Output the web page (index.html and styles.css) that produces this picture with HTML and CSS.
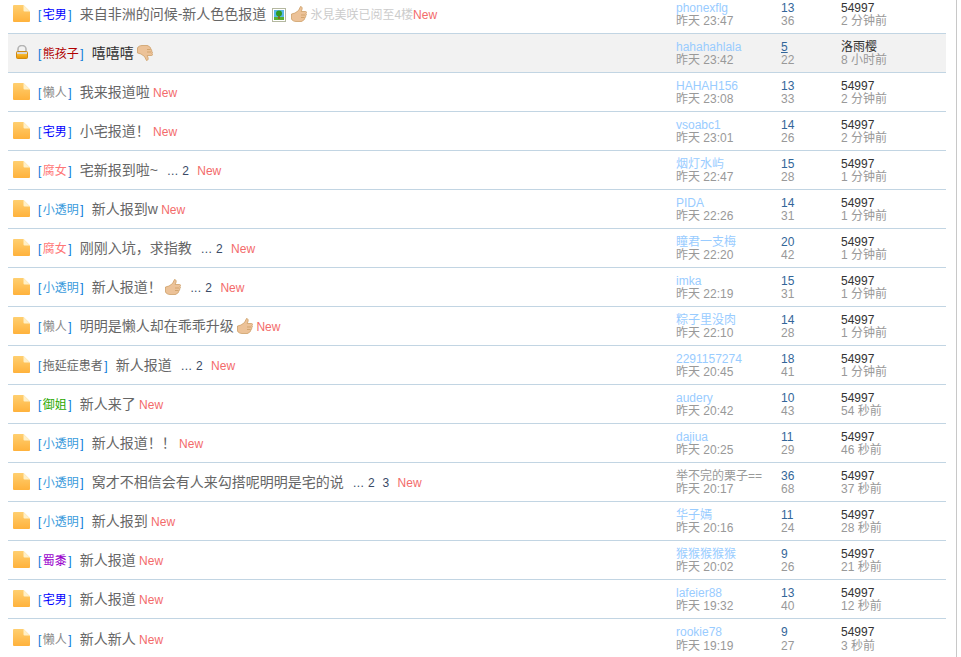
FILE: index.html
```html
<!DOCTYPE html>
<html lang="zh-CN">

<head>
    <meta charset="UTF-8">
    <meta name="viewport" content="width=device-width, initial-scale=1.0">
    <title>新人报道</title>
    <link rel="stylesheet" href="styles.css">
</head>

<body>
    <!-- icons -->
    <svg class="icon-defs" width="0" height="0">
        <defs>
            <linearGradient id="folder-fill" x1="0" y1="0" x2="0" y2="1">
                <stop offset="0" stop-color="#ffcf70" />
                <stop offset="1" stop-color="#ffb23c" />
            </linearGradient>
            <linearGradient id="lock-fill" x1="0" y1="0" x2="0" y2="1">
                <stop offset="0" stop-color="#ffd050" />
                <stop offset="1" stop-color="#e89400" />
            </linearGradient>
        </defs>
        <symbol id="i-folder" viewBox="0 0 17 17">
            <path d="M1 0H10.500L17 6.500V16A1 1 0 0 1 16 17H1A1 1 0 0 1 0 16V1A1 1 0 0 1 1 0Z" fill="url(#folder-fill)" />
            <path d="M10.500 0L17 6.500H11.500A1 1 0 0 1 10.500 5.500Z" fill="#fff0c8" />
        </symbol>
        <symbol id="i-lock" viewBox="0 0 12 14">
            <path d="M2 8V4A4 3.500 0 0 1 10 4V8" fill="none" stroke="#b4b4b4" stroke-width="1.600" />
            <rect x="0.500" y="6.500" width="11" height="7" rx="1" fill="url(#lock-fill)" stroke="#d08a10" />
            <rect x="1" y="7" width="10" height="2" fill="#d8d8d8" />
        </symbol>
        <symbol id="i-pic" viewBox="0 0 14 14">
            <rect x="0.500" y="0.500" width="13" height="13" fill="#fff" stroke="#b4b8a0" />
            <rect x="2" y="2" width="10" height="10" fill="#58b8e8" />
            <rect x="2" y="9" width="10" height="3" fill="#58b030" />
            <rect x="6.200" y="7" width="1.600" height="4" fill="#8a5a20" />
            <circle cx="7" cy="5.500" r="3" fill="#2e9a20" />
        </symbol>
        <symbol id="i-up" viewBox="0 0 16 16">
            <path d="M0.500 8L4 7L7.500 4.500L9.500 0.500C11 0.500 11.500 2 11 3.500L10.200 5.500H14.500C15.800 5.500 16 7 15 7.500C15.800 8.300 15.500 9.500 14.500 9.800C15 10.800 14.500 11.800 13.600 12C13.900 13 13.300 14 12.300 14.200C12 15 11 15.500 10 15.500H5C3 15.500 1 14.500 0.500 13Z" fill="#ecc298" stroke="#c8985c" stroke-width="0.700" />
            <path d="M10 9H14M10 11.500H13.500" stroke="#c8985c" stroke-width="0.700" />
        </symbol>
    </svg>

    <div class="page">
        <table class="thread-list">
            <colgroup>
                <col class="col-icon">
                <col class="col-title">
                <col class="col-author">
                <col class="col-num">
                <col class="col-last">
            </colgroup>
            <tbody>
                <tr>
                    <td class="icn"><svg class="ico-folder"><use href="#i-folder" /></svg></td>
                    <td><span class="tag">[<span class="t-zhai">宅男</span>]</span><a class="subject">来自非洲的问候-新人色色报道</a> <svg class="ico-pic"><use href="#i-pic" /></svg> <svg class="ico-thumb"><use href="#i-up" /></svg> <span class="read-to">氷見美咲已阅至4楼</span><a class="new">New</a></td>
                    <td class="by"><a>phonexflg</a><em>昨天 23:47</em></td>
                    <td class="num"><a>13</a><em>36</em></td>
                    <td class="by last"><a>54997</a><em>2 分钟前</em></td>
                </tr>
                <tr class="locked">
                    <td class="icn"><svg class="ico-lock"><use href="#i-lock" /></svg></td>
                    <td><span class="tag">[<span class="t-xiong">熊孩子</span>]</span><a class="subject">嘻嘻嘻</a> <svg class="ico-thumb down"><use href="#i-up" /></svg></td>
                    <td class="by"><a>hahahahlala</a><em>昨天 23:42</em></td>
                    <td class="num"><a class="under">5</a><em>22</em></td>
                    <td class="by last"><a>洛雨樱</a><em>8 小时前</em></td>
                </tr>
                <tr>
                    <td class="icn"><svg class="ico-folder"><use href="#i-folder" /></svg></td>
                    <td><span class="tag">[<span class="t-lan">懒人</span>]</span><a class="subject">我来报道啦</a> <a class="new">New</a></td>
                    <td class="by"><a>HAHAH156</a><em>昨天 23:08</em></td>
                    <td class="num"><a>13</a><em>33</em></td>
                    <td class="by last"><a>54997</a><em>2 分钟前</em></td>
                </tr>
                <tr>
                    <td class="icn"><svg class="ico-folder"><use href="#i-folder" /></svg></td>
                    <td><span class="tag">[<span class="t-zhai">宅男</span>]</span><a class="subject">小宅报道！</a> <a class="new">New</a></td>
                    <td class="by"><a>vsoabc1</a><em>昨天 23:01</em></td>
                    <td class="num"><a>14</a><em>26</em></td>
                    <td class="by last"><a>54997</a><em>2 分钟前</em></td>
                </tr>
                <tr>
                    <td class="icn"><svg class="ico-folder"><use href="#i-folder" /></svg></td>
                    <td><span class="tag">[<span class="t-fu">腐女</span>]</span><a class="subject">宅新报到啦~</a> <span class="pages">... 2</span><a class="new">New</a></td>
                    <td class="by"><a>烟灯水屿</a><em>昨天 22:47</em></td>
                    <td class="num"><a>15</a><em>28</em></td>
                    <td class="by last"><a>54997</a><em>1 分钟前</em></td>
                </tr>
                <tr>
                    <td class="icn"><svg class="ico-folder"><use href="#i-folder" /></svg></td>
                    <td><span class="tag">[<span class="t-tou">小透明</span>]</span><a class="subject">新人报到w</a> <a class="new">New</a></td>
                    <td class="by"><a>PIDA</a><em>昨天 22:26</em></td>
                    <td class="num"><a>14</a><em>31</em></td>
                    <td class="by last"><a>54997</a><em>1 分钟前</em></td>
                </tr>
                <tr>
                    <td class="icn"><svg class="ico-folder"><use href="#i-folder" /></svg></td>
                    <td><span class="tag">[<span class="t-fu">腐女</span>]</span><a class="subject">刚刚入坑，求指教</a> <span class="pages">... 2</span><a class="new">New</a></td>
                    <td class="by"><a>瞳君一支梅</a><em>昨天 22:20</em></td>
                    <td class="num"><a>20</a><em>42</em></td>
                    <td class="by last"><a>54997</a><em>1 分钟前</em></td>
                </tr>
                <tr>
                    <td class="icn"><svg class="ico-folder"><use href="#i-folder" /></svg></td>
                    <td><span class="tag">[<span class="t-tou">小透明</span>]</span><a class="subject">新人报道！</a> <svg class="ico-thumb"><use href="#i-up" /></svg> <span class="pages">... 2</span><a class="new">New</a></td>
                    <td class="by"><a>imka</a><em>昨天 22:19</em></td>
                    <td class="num"><a>15</a><em>31</em></td>
                    <td class="by last"><a>54997</a><em>1 分钟前</em></td>
                </tr>
                <tr>
                    <td class="icn"><svg class="ico-folder"><use href="#i-folder" /></svg></td>
                    <td><span class="tag">[<span class="t-lan">懒人</span>]</span><a class="subject">明明是懒人却在乖乖升级</a> <svg class="ico-thumb"><use href="#i-up" /></svg> <a class="new">New</a></td>
                    <td class="by"><a>粽子里没肉</a><em>昨天 22:10</em></td>
                    <td class="num"><a>14</a><em>28</em></td>
                    <td class="by last"><a>54997</a><em>1 分钟前</em></td>
                </tr>
                <tr>
                    <td class="icn"><svg class="ico-folder"><use href="#i-folder" /></svg></td>
                    <td><span class="tag">[<span class="t-tuo">拖延症患者</span>]</span><a class="subject">新人报道</a> <span class="pages">... 2</span><a class="new">New</a></td>
                    <td class="by"><a>2291157274</a><em>昨天 20:45</em></td>
                    <td class="num"><a>18</a><em>41</em></td>
                    <td class="by last"><a>54997</a><em>1 分钟前</em></td>
                </tr>
                <tr>
                    <td class="icn"><svg class="ico-folder"><use href="#i-folder" /></svg></td>
                    <td><span class="tag">[<span class="t-yu">御姐</span>]</span><a class="subject">新人来了</a> <a class="new">New</a></td>
                    <td class="by"><a>audery</a><em>昨天 20:42</em></td>
                    <td class="num"><a>10</a><em>43</em></td>
                    <td class="by last"><a>54997</a><em>54 秒前</em></td>
                </tr>
                <tr>
                    <td class="icn"><svg class="ico-folder"><use href="#i-folder" /></svg></td>
                    <td><span class="tag">[<span class="t-tou">小透明</span>]</span><a class="subject">新人报道！！</a> <a class="new">New</a></td>
                    <td class="by"><a>dajiua</a><em>昨天 20:25</em></td>
                    <td class="num"><a>11</a><em>29</em></td>
                    <td class="by last"><a>54997</a><em>46 秒前</em></td>
                </tr>
                <tr>
                    <td class="icn"><svg class="ico-folder"><use href="#i-folder" /></svg></td>
                    <td><span class="tag">[<span class="t-tou">小透明</span>]</span><a class="subject">窝才不相信会有人来勾搭呢明明是宅的说</a> <span class="pages">... 2&nbsp;&nbsp;3</span><a class="new">New</a></td>
                    <td class="by"><a class="gray">举不完的栗子==</a><em>昨天 20:17</em></td>
                    <td class="num"><a>36</a><em>68</em></td>
                    <td class="by last"><a>54997</a><em>37 秒前</em></td>
                </tr>
                <tr>
                    <td class="icn"><svg class="ico-folder"><use href="#i-folder" /></svg></td>
                    <td><span class="tag">[<span class="t-tou">小透明</span>]</span><a class="subject">新人报到</a> <a class="new">New</a></td>
                    <td class="by"><a>华子嫣</a><em>昨天 20:16</em></td>
                    <td class="num"><a>11</a><em>24</em></td>
                    <td class="by last"><a>54997</a><em>28 秒前</em></td>
                </tr>
                <tr>
                    <td class="icn"><svg class="ico-folder"><use href="#i-folder" /></svg></td>
                    <td><span class="tag">[<span class="t-shu">蜀黍</span>]</span><a class="subject">新人报道</a> <a class="new">New</a></td>
                    <td class="by"><a>猴猴猴猴猴</a><em>昨天 20:02</em></td>
                    <td class="num"><a>9</a><em>26</em></td>
                    <td class="by last"><a>54997</a><em>21 秒前</em></td>
                </tr>
                <tr>
                    <td class="icn"><svg class="ico-folder"><use href="#i-folder" /></svg></td>
                    <td><span class="tag">[<span class="t-zhai">宅男</span>]</span><a class="subject">新人报道</a> <a class="new">New</a></td>
                    <td class="by"><a>lafeier88</a><em>昨天 19:32</em></td>
                    <td class="num"><a>13</a><em>40</em></td>
                    <td class="by last"><a>54997</a><em>12 秒前</em></td>
                </tr>
                <tr>
                    <td class="icn"><svg class="ico-folder"><use href="#i-folder" /></svg></td>
                    <td><span class="tag">[<span class="t-lan">懒人</span>]</span><a class="subject">新人新人</a> <a class="new">New</a></td>
                    <td class="by"><a>rookie78</a><em>昨天 19:19</em></td>
                    <td class="num"><a>9</a><em>27</em></td>
                    <td class="by last"><a>54997</a><em>3 秒前</em></td>
                </tr>
            </tbody>
        </table>
    </div>
</body>

</html>
```

FILE: styles.css
```css
* {
    box-sizing: border-box;
    margin: 0;
    padding: 0;
}

html,
body {
    height: 100%;
    overflow: hidden;
    background-color: white;
}

body {
    font-family: "Liberation Sans", "Noto Sans CJK SC", sans-serif;
    font-size: 12px;
    color: #444;
}

.icon-defs {
    position: absolute;
}

/* The list is scrolled a little, so the first row is cut at the top */
.page {
    width: 957px;
    height: 657px;
    padding-left: 8px;
    padding-right: 10px;
    border-right: 1px solid #c8c8c8;
    overflow: hidden;
}

.thread-list {
    width: 938px;
    margin-top: -5px;
    table-layout: fixed;
    border-collapse: separate;
    border-spacing: 0;
}

.col-icon {
    width: 30px;
}

.col-title {
    width: 638px;
}

.col-author {
    width: 105px;
}

.col-num {
    width: 60px;
}

.col-last {
    width: 105px;
}

.thread-list td {
    height: 39px;
    padding-bottom: 2px;
    border-bottom: 1px solid #c2d5e3;
    vertical-align: middle;
    white-space: nowrap;
}

.thread-list .by,
.thread-list .num {
    padding-bottom: 0;
}

.thread-list tr:last-child td {
    border-bottom: 0;
}

.locked td {
    background-color: #f2f2f2;
}

.thread-list .icn {
    padding-left: 5px;
    line-height: 0;
}

.ico-folder {
    width: 17px;
    height: 17px;
}

.ico-lock {
    width: 12px;
    height: 14px;
    margin-left: 3px;
}

.ico-pic {
    width: 14px;
    height: 14px;
    margin: 0 2px;
    vertical-align: -3px;
}

.ico-thumb {
    width: 16px;
    height: 16px;
    vertical-align: -3px;
}

.ico-thumb.down {
    transform: scaleY(-1);
}

/* Thread title */
.tag {
    margin-right: 8px;
    color: #0a7ad8;
}

.tag span {
    margin: 0 1.500px;
}

.t-zhai {
    color: #00f;
}

.t-xiong {
    color: #b00000;
}

.t-lan {
    color: #888;
}

.t-fu {
    color: #f77;
}

.t-tou {
    color: #3a9bdc;
}

.t-tuo {
    color: #666;
}

.t-yu {
    color: #2aa800;
}

.t-shu {
    color: #90c;
}

.subject {
    font-size: 14px;
    color: #666;
}

.locked .subject {
    color: #333;
}

.read-to {
    color: #ccc;
}

.pages {
    margin-left: 6px;
    margin-right: 8px;
    letter-spacing: 0.400px;
    color: #3a4a66;
}

.new {
    color: #f36b6b;
}

/* Author, count and last post columns */
.by a,
.by em,
.num a,
.num em {
    display: block;
    height: 13.500px;
    line-height: 14px;
    font-style: normal;
}

.by a {
    color: #9cf;
}

.by a.gray {
    color: #999;
}

.by em,
.num em {
    color: #999;
}

.num a {
    color: #369;
}

.num a.under {
    text-decoration: underline;
}

.last a {
    color: #333;
}
```
